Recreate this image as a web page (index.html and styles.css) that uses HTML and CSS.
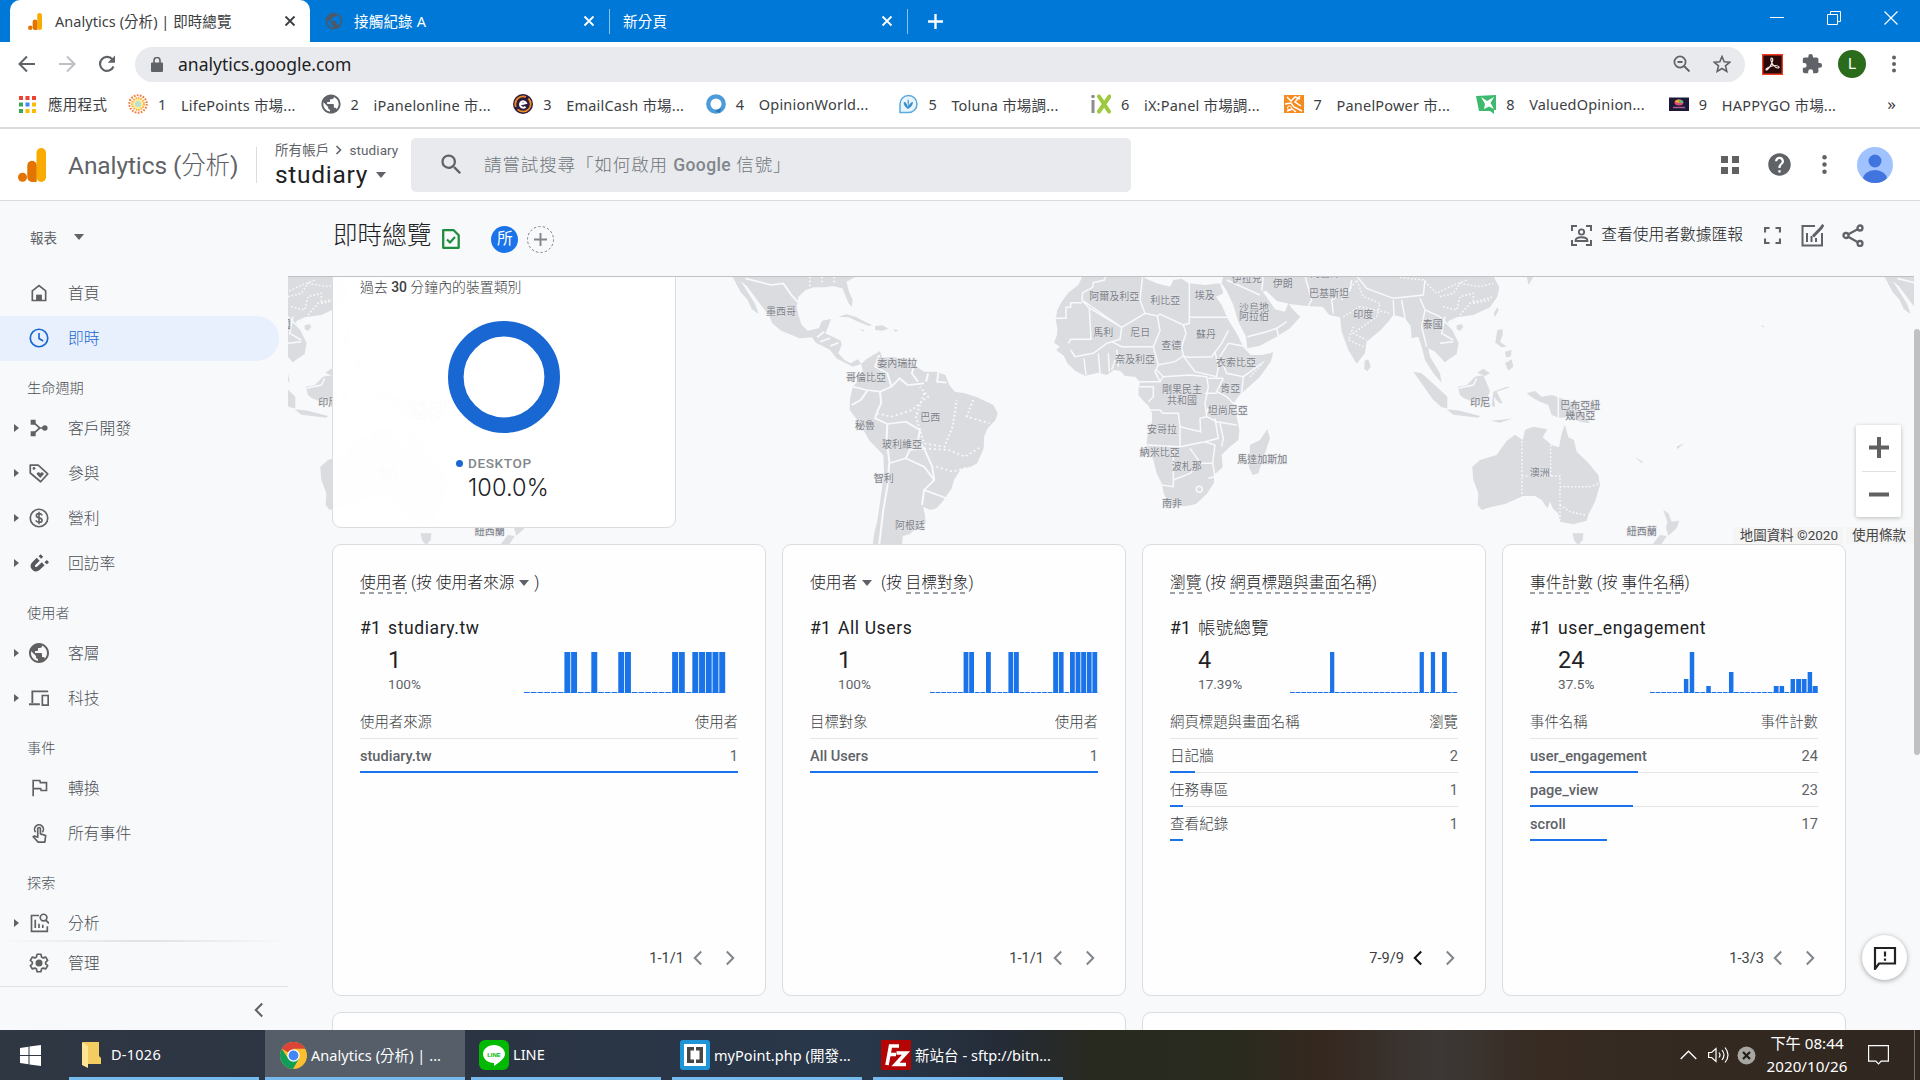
FILE: index.html
```html
<!DOCTYPE html>
<html lang="zh-Hant">
<head>
<meta charset="utf-8">
<title>Analytics (分析) | 即時總覽</title>
<link rel="stylesheet" href="styles.css">
</head>
<body>
<svg class="defs" width="0" height="0">
  <symbol id="ga" viewBox="0 0 28 34"><rect x="18.5" y="0" width="9.5" height="34" rx="4.7" fill="#f9ab00"/><path d="M9.3 17.5a4.7 4.7 0 0 1 9.4 0V34H14a4.7 4.7 0 0 1-4.700-4.700z" fill="#e37400"/><circle cx="4.500" cy="29.300" r="4.500" fill="#e37400"/></symbol>
  <symbol id="x" viewBox="0 0 12 12"><path d="M1.500 1.500l9 9m0-9l-9 9" stroke="currentColor" stroke-width="1.800" fill="none"/></symbol>
  <symbol id="globe" viewBox="0 0 24 24"><path fill="currentColor" d="M12 2C6.480 2 2 6.480 2 12s4.480 10 10 10 10-4.480 10-10S17.520 2 12 2zm-1 17.930c-3.950-.49-7-3.850-7-7.930 0-.62.080-1.210.210-1.790L9 15v1c0 1.100.9 2 2 2v1.930zm6.900-2.540c-.26-.81-1-1.390-1.900-1.390h-1v-3c0-.55-.45-1-1-1H8v-2h2c.55 0 1-.45 1-1V7h2c1.100 0 2-.9 2-2v-.41c2.930 1.190 5 4.060 5 7.410 0 2.080-.8 3.970-2.100 5.390z"/></symbol>
  <symbol id="dots" viewBox="0 0 24 24"><g fill="currentColor"><circle cx="12" cy="5.500" r="2"/><circle cx="12" cy="12" r="2"/><circle cx="12" cy="18.500" r="2"/></g></symbol>
  <symbol id="left" viewBox="0 0 24 24"><path d="M15.500 5l-7 7 7 7" fill="none" stroke="currentColor" stroke-width="2.200"/></symbol>
  <symbol id="right" viewBox="0 0 24 24"><path d="M8.500 5l7 7-7 7" fill="none" stroke="currentColor" stroke-width="2.200"/></symbol>
  <symbol id="search" viewBox="0 0 24 24"><path fill="currentColor" d="M15.500 14h-.79l-.28-.27A6.470 6.470 0 0 0 16 9.500 6.500 6.500 0 1 0 9.500 16c1.610 0 3.090-.59 4.230-1.570l.27.280v.79l5 4.990L20.490 19zM9.500 14a4.500 4.500 0 1 1 0-9 4.500 4.500 0 0 1 0 9z"/></symbol>
</svg>

<div class="tabs">
  <div class="tab active"><svg class="fav"><use href="#ga"/></svg><span>Analytics (分析) | 即時總覽</span><svg class="close"><use href="#x"/></svg></div>
  <div class="tab two"><svg class="fav globe"><use href="#globe"/></svg><span>接觸紀錄 A</span><svg class="close"><use href="#x"/></svg></div>
  <div class="tab three"><span>新分頁</span><svg class="close"><use href="#x"/></svg></div>
  <svg class="newtab" viewBox="0 0 14 14"><path d="M7 0v14M0 7h14" stroke="#fff" stroke-width="2.200"/></svg>
  <div class="winbtns">
    <svg viewBox="0 0 14 14"><path d="M0 6.500h14" stroke="#fff"/></svg>
    <svg viewBox="0 0 14 14"><path d="M.5 3.500h10v10H.5zM3.500 3.500v-3h10v10h-3" fill="none" stroke="#fff"/></svg>
    <svg viewBox="0 0 14 14"><path d="M.5.500l13 13m0-13l-13 13" stroke="#fff" stroke-width="1.200"/></svg>
  </div>
</div>

<div class="toolbar">
  <svg class="nav" viewBox="0 0 18 18"><path d="M17 9H2M9 1.500L1.500 9 9 16.500" fill="none" stroke="#5f6368" stroke-width="2"/></svg>
  <svg class="nav" viewBox="0 0 18 18"><path d="M1 9h15M9 1.500L16.500 9 9 16.500" fill="none" stroke="#bdc1c6" stroke-width="2"/></svg>
  <svg class="nav" viewBox="0 0 18 18"><path d="M15.500 11.500A7 7 0 1 1 14.500 4.500" fill="none" stroke="#5f6368" stroke-width="2.100"/><path d="M17 .5v7.300H9.700z" fill="#5f6368"/></svg>
  <div class="omnibox">
    <svg class="lock" viewBox="0 0 12 15"><path d="M1 5.500h10a1 1 0 0 1 1 1V14a1 1 0 0 1-1 1H1a1 1 0 0 1-1-1V6.500a1 1 0 0 1 1-1z" fill="#5f6368"/><path d="M3 6V3.500a3 3 0 0 1 6 0V6" fill="none" stroke="#5f6368" stroke-width="1.600"/></svg>
    <span class="url">analytics.google.com</span>
    <svg class="oi" viewBox="0 0 18 18"><circle cx="7" cy="7" r="5.600" fill="none" stroke="#5f6368" stroke-width="1.700"/><path d="M11 11l5.500 5.500M4.500 7h5" stroke="#5f6368" stroke-width="1.800"/></svg>
    <svg class="oi" viewBox="0 0 18 18"><path d="M9 1.500l2.200 5.200 5.600.5-4.300 3.700 1.300 5.500L9 13.500l-4.800 2.900 1.300-5.500L1.200 7.200l5.600-.5z" fill="none" stroke="#5f6368" stroke-width="1.600"/></svg>
  </div>
  <div class="exts">
    <svg width="21" height="21" viewBox="0 0 21 21"><path d="M.7.700h19.600v19.600H.7z" fill="#2a0a08" stroke="#f0391f" stroke-width="1.400"/><path d="M9.500 4c2.500 0 .8 5-1.500 8.500-1.500 2.500-4 4.500-4 3s6-4 9.500-4 4.500 2.500 2.500 2.500C13.500 14 9.500 10 9 6.500 8.800 5 9 4 9.500 4z" fill="none" stroke="#f4e4e2" stroke-width="1.200"/></svg>
    <svg width="22" height="22" viewBox="0 0 24 24"><path fill="#5f6368" d="M20.500 11H19V7c0-1.100-.9-2-2-2h-4V3.500a2.500 2.500 0 0 0-5 0V5H4c-1.100 0-1.990.9-1.990 2v3.800H3.500a2.700 2.700 0 0 1 0 5.400H2V20c0 1.100.9 2 2 2h3.800v-1.500a2.700 2.700 0 0 1 5.400 0V22H17c1.100 0 2-.9 2-2v-4h1.500a2.500 2.500 0 0 0 0-5z"/></svg>
    <span class="me">L</span>
    <svg width="20" height="24" viewBox="2 0 20 24" color="#5f6368"><use href="#dots" width="24" height="24"/></svg>
  </div>
</div>

<div class="bookmarks">
  <div class="apps"><svg width="17" height="17" viewBox="0 0 17 17"><path d="M0 0h4v4H0zM6.500 0h4v4h-4zM13 0h4v4h-4z" fill="#ea4335"/><path d="M0 6.500h4v4H0z" fill="#34a853"/><path d="M6.500 6.500h4v4h-4z" fill="#4285f4"/><path d="M13 6.500h4v4h-4zM6.500 13h4v4h-4zM13 13h4v4h-4z" fill="#fbbc04"/><path d="M0 13h4v4H0z" fill="#34a853"/></svg><span>應用程式</span></div>
  <div class="bm"><svg viewBox="0 0 20 20"><circle cx="10" cy="10" r="8.700" fill="none" stroke="#f0793c" stroke-width="2" stroke-dasharray="1.700 1.340"/><circle cx="10" cy="10" r="6" fill="#ffe9a0" stroke="#fbb040" stroke-width="2" stroke-dasharray="1.500 1"/><circle cx="10" cy="10" r="3" fill="#b4e3d2"/></svg><i>1</i><span>LifePoints 市場...</span></div>
  <div class="bm"><svg color="#5f6368"><use href="#globe" x="-1.500" y="-1.500" width="23" height="23"/></svg><i>2</i><span>iPanelonline 市...</span></div>
  <div class="bm"><svg viewBox="0 0 20 20"><circle cx="10" cy="10" r="10" fill="#2d1b3d"/><circle cx="10" cy="10" r="7.700" fill="none" stroke="#f08a24" stroke-width="1.800" stroke-dasharray="18 3"/><path d="M7 10.500l6-1.500a3.200 3.200 0 1 0-.5 3.800" fill="none" stroke="#fff" stroke-width="2"/></svg><i>3</i><span>EmailCash 市場...</span></div>
  <div class="bm"><svg viewBox="0 0 20 20"><circle cx="10" cy="10" r="7.700" fill="#fff" stroke="#4b9cd8" stroke-width="4.300"/><path d="M9 17l6-3-1 5z" fill="#2d78b8"/></svg><i>4</i><span>OpinionWorld...</span></div>
  <div class="bm"><svg viewBox="0 0 20 20"><path d="M2 18.500V10a8.500 8.500 0 1 1 8.500 8.500z" fill="#e8f5fc" stroke="#5aa9da" stroke-width="1.500"/><path d="M10 15c-3-2-5-5-4-7 2 0 3 2 4 5 0-4-1-6 0-8 1.500 2 1 5 0 8 1-3 3-5 5-5 0 3-2 5-5 7z" fill="#3b8fc9"/></svg><i>5</i><span>Toluna 市場調...</span></div>
  <div class="bm"><svg viewBox="0 0 20 20"><path d="M2 6v13" stroke="#8a8d91" stroke-width="3"/><circle cx="2" cy="2.500" r="1.800" fill="#8a8d91"/><path d="M8 2.500l10 15M18.500 2.500L8 17.500" stroke="#9bcb3c" stroke-width="4" stroke-linecap="round"/></svg><i>6</i><span>iX:Panel 市場調...</span></div>
  <div class="bm"><svg viewBox="0 0 20 20"><path d="M0 1h20v18H0z" fill="#f58a1f"/><path d="M3 3l4 4 4-4 5 2M16 2l-5 6 6 4M1 10l6-1 3 4 8 4M3 17l5-2 4 3" fill="none" stroke="#fff" stroke-width="1.500"/><circle cx="5.500" cy="14" r="2" fill="none" stroke="#fff"/></svg><i>7</i><span>PanelPower 市...</span></div>
  <div class="bm"><svg viewBox="0 0 20 20"><path d="M0 2l20-1v15h-2v4l-4-3H3z" fill="#3dba6d"/><path d="M5 3l6 4 7-4-3.500 6 3.500 6-5-2.500-5 2.500 1-5z" fill="#fff"/></svg><i>8</i><span>ValuedOpinion...</span></div>
  <div class="bm"><svg viewBox="0 0 20 20"><path d="M0 3.500h20v13.500H0z" fill="#1e1838"/><ellipse cx="10" cy="8.500" rx="4.500" ry="3" fill="#e2487c"/><path d="M6 8a4 2.500 0 0 1 4-2.500V9z" fill="#f5a623"/><path d="M10 9V5.500A4 3 0 0 1 14 9z" fill="#5bb974"/><path d="M4 13.500h12" stroke="#b05d8a" stroke-width="1.500"/></svg><i>9</i><span>HAPPYGO 市場...</span></div>
  <span class="more">»</span>
</div>

<header class="gahead">
  <svg class="galogo"><use href="#ga"/></svg>
  <span class="brand">Analytics (<em>分析</em>)</span>
  <div class="acct">
    <div class="crumb"><span>所有帳戶</span><svg width="8" height="10" viewBox="0 0 8 10"><path d="M1.500 1l4 4-4 4" fill="none" stroke="#5f6368" stroke-width="1.600"/></svg><span>studiary</span></div>
    <div class="prop">studiary<i class="caret"></i></div>
  </div>
  <div class="gsearch"><svg class="gs"><use href="#search"/></svg><span>請嘗試搜尋「如何啟用 <b>Google</b> 信號」</span></div>
  <div class="hicons">
    <svg width="18" height="18" viewBox="0 0 18 18"><path d="M0 0h7v7H0zM11 0h7v7h-7zM0 11h7v7H0zM11 11h7v7h-7z" fill="#616161"/></svg>
    <svg class="help" width="27" height="27" viewBox="0 0 24 24"><path fill="#5f6368" d="M12 2C6.480 2 2 6.480 2 12s4.480 10 10 10 10-4.480 10-10S17.520 2 12 2zm1 17h-2v-2h2v2zm2.070-7.750l-.9.920C13.450 12.900 13 13.500 13 15h-2v-.5c0-1.100.45-2.100 1.170-2.830l1.240-1.260c.37-.36.590-.86.590-1.410 0-1.100-.9-2-2-2s-2 .9-2 2H8c0-2.210 1.790-4 4-4s4 1.790 4 4c0 .88-.36 1.680-.93 2.250z"/></svg>
    <svg width="27" height="27" viewBox="0 0 24 24" color="#5f6368"><use href="#dots" width="24" height="24"/></svg>
    <svg width="36" height="36" viewBox="0 0 36 36"><clipPath id="av"><circle cx="18" cy="18" r="18"/></clipPath><g clip-path="url(#av)"><path d="M0 0h36v36H0z" fill="#a0c3ff"/><circle cx="18" cy="14" r="6.500" fill="#4274e0"/><ellipse cx="18" cy="32" rx="12" ry="9" fill="#4274e0"/></g></svg>
  </div>
</header>

<div class="main">
  <nav class="side">
    <div class="rep">報表<i class="caret"></i></div>
    <div class="items">
      <div class="it"><svg viewBox="0 0 24 24"><path d="M4 21V9.500L12 3l8 6.500V21z" fill="none" stroke="#616161" stroke-width="2"/><path d="M8.500 21v-7h7v7z" fill="#616161"/></svg>首頁</div>
      <div class="it on"><svg viewBox="0 0 24 24"><circle cx="12" cy="12" r="10.500" fill="none" stroke="#1967d2" stroke-width="2"/><path d="M12 6v6.500l5 3" fill="none" stroke="#1967d2" stroke-width="2"/></svg>即時</div>
      <div class="sec">生命週期</div>
      <div class="it ex"><svg viewBox="0 0 24 24"><path d="M2 2h6v6H2zM2 16h6v6H2z" fill="#616161"/><circle cx="19" cy="12" r="3.300" fill="#616161"/><path d="M5 5l8 7-8 7M13 12h6" fill="none" stroke="#616161" stroke-width="2"/></svg>客戶開發</div>
      <div class="it ex"><svg viewBox="0 0 24 24"><path d="M1.500 2.500h9.500l11.500 10.500-8.500 9.500L1.500 12z" fill="none" stroke="#616161" stroke-width="2" stroke-linejoin="round"/><circle cx="6" cy="6.500" r="1.700" fill="#616161"/><path d="M13.500 18l-4-4.200c-1-2.500 2.500-3.800 4-1.500 1.500-2.300 5-1 4 1.500z" fill="#616161"/></svg>參與</div>
      <div class="it ex"><svg viewBox="0 0 24 24"><circle cx="12" cy="12" r="10.500" fill="none" stroke="#616161" stroke-width="2"/><path d="M15.500 9c-.3-3-6.700-3-6.700.2 0 3.500 6.900 1.800 6.900 5.500 0 3.300-6.900 3.300-7.200 0M12 4.500v15" fill="none" stroke="#616161" stroke-width="1.900"/></svg>營利</div>
      <div class="it ex"><svg viewBox="0 0 24 24"><path d="M11 7.500l-5.500 5.500c-3 3.500 2 8.500 5.500 5.500l6-5.500" fill="none" stroke="#55585c" stroke-width="5"/><path d="M14 1.500l3 3-2.500 2.500-3-3zM21.500 8.500l2.500 2.500-2.500 2.500-3-2.500z" fill="#55585c"/></svg>回訪率</div>
      <div class="sec">使用者</div>
      <div class="it ex"><svg class="gl" color="#616161"><use href="#globe"/></svg>客層</div>
      <div class="it ex"><svg viewBox="0 0 24 24"><path d="M23 4H4v14M0 19.500h13" fill="none" stroke="#616161" stroke-width="2.200"/><path d="M16 9h7v11.500h-7z" fill="none" stroke="#616161" stroke-width="2"/></svg>科技</div>
      <div class="sec">事件</div>
      <div class="it"><svg viewBox="0 0 24 24"><path d="M5 22V3h8l.6 2.500H21V15h-6.500L14 12.800H5" fill="none" stroke="#616161" stroke-width="2"/></svg>轉換</div>
      <div class="it"><svg viewBox="0 0 24 24"><path d="M8 11a5.300 5.300 0 1 1 8 0" fill="none" stroke="#616161" stroke-width="2"/><path d="M10.500 17V7a1.500 1.500 0 0 1 3.200 0v6l6.300 2-1 8h-8l-6-6.500 1.500-1z" fill="none" stroke="#616161" stroke-width="2" stroke-linejoin="round"/></svg>所有事件</div>
      <div class="sec">探索</div>
      <div class="it ex"><svg viewBox="0 0 24 24"><path d="M12 3H3v19h19v-6M7.500 8v10M12 13v5M16.500 14v4" fill="none" stroke="#616161" stroke-width="2"/><circle cx="17.500" cy="5.500" r="4" fill="none" stroke="#616161" stroke-width="2"/><path d="M20 8.500l4 4" stroke="#616161" stroke-width="2.200"/></svg>分析</div>
    </div>
    <div class="admin"><svg viewBox="0 0 24 24"><path d="M9.700 1.500h4.600l.7 3.200 2 1.200 3.100-1 2.300 4-2.400 2.100v2l2.400 2.100-2.300 4-3.100-1-2 1.200-.7 3.200H9.700L9 19.300l-2-1.200-3.100 1-2.300-4L4 13v-2L1.600 8.900l2.300-4 3.100 1 2-1.200z" fill="none" stroke="#616161" stroke-width="2" stroke-linejoin="round"/><circle cx="12" cy="12" r="4.200" fill="#616161"/></svg>管理</div>
    <div class="fold"><svg width="22" height="22"><use href="#left"/></svg></div>
  </nav>

  <section class="content">
    <div class="titlebar">
      <h1>即時總覽</h1>
      <svg class="ok" viewBox="0 0 18 20"><path d="M1.200 1.200h10.500l5 5v12.600H1.200z" fill="none" stroke="#1e8e3e" stroke-width="2.300" stroke-linejoin="round"/><path d="M5 10.500l3 3 5-5.500" fill="none" stroke="#1e8e3e" stroke-width="2.200"/></svg>
      <span class="seg">所</span>
      <svg class="addseg" viewBox="0 0 27 27"><circle cx="13.500" cy="13.500" r="13" fill="none" stroke="#80868b" stroke-dasharray="2.500 2"/><path d="M13.500 7v13M7 13.500h13" stroke="#80868b" stroke-width="1.900"/></svg>
      <div class="tools">
        <svg width="21" height="21" viewBox="0 0 21 21"><path d="M1 6V1h5M15 1h5v5M20 15v5h-5M6 20H1v-5" fill="none" stroke="#5f6368" stroke-width="2"/><circle cx="10.500" cy="7" r="2.700" fill="none" stroke="#5f6368" stroke-width="1.800"/><path d="M4.500 16c0-5 12-5 12 0z" fill="none" stroke="#5f6368" stroke-width="1.800"/></svg>
        <span>查看使用者數據匯報</span>
        <svg class="t2" width="17" height="17" viewBox="0 0 17 17"><path d="M1 5.500V1h4.500M11.500 1H16v4.500M16 11.500V16h-4.500M5.500 16H1v-4.500" fill="none" stroke="#5f6368" stroke-width="2.200"/></svg>
        <svg class="t3" width="23" height="23" viewBox="0 0 23 23"><path d="M14 2H1.500v19.500H21V9M6 9v9M10.500 12v6M15 14v4" fill="none" stroke="#5f6368" stroke-width="2"/><path d="M12 12.500L21 3M20.500 1l2 2" stroke="#5f6368" stroke-width="3"/></svg>
        <svg class="t4" width="23" height="23" viewBox="0 0 23 23"><path d="M4 11.500l14-7.500M4 11.500l14 8" stroke="#5f6368" stroke-width="2.200"/><g fill="#f8f9fb" stroke="#5f6368" stroke-width="2.300"><circle cx="4" cy="11.500" r="2.500"/><circle cx="18" cy="4" r="2.500"/><circle cx="18" cy="19.500" r="2.500"/></g></svg>
      </div>
    </div>

    <div class="mapbox">
      <svg class="map" viewBox="288 276 1626 268">
        <defs>
          <g id="world">
            <g transform="translate(320 200) scale(.40816 .33333)">
              <g fill="#dadce0">
                <path d="M1010 228H1315L1290 245 1296 275 1305 300 1303 320 1295 310 1280 265 1255 258 1240 262 1210 262 1190 270 1172 290 1168 320 1172 345 1180 375 1195 392 1222 385 1230 362 1252 357 1245 380 1238 400 1252 408 1276 422 1278 435 1270 460 1285 480 1300 490 1318 478 1326 492 1305 500 1265 475 1250 450 1215 428 1205 412 1175 415 1130 392 1108 370 1100 345 1080 315 1062 285 1045 258 1030 242 1050 280 1066 312 1075 342 1058 328 1048 300 1030 275Z"/>
                <path d="M1270 350L1290 343 1312 350 1335 365 1352 375 1345 378 1320 366 1295 352ZM1360 378L1378 376 1392 386 1378 392 1360 390ZM1405 388L1417 390 1410 396ZM1322 388L1335 390 1330 394Z"/>
                <path d="M1326 492L1338 478 1372 453 1378 475 1400 470 1445 480 1455 495 1480 515 1510 515 1532 525 1542 555 1555 575 1580 580 1610 592 1650 615 1660 640 1655 660 1636 685 1627 710 1626 745 1610 790 1595 800 1570 808 1553 840 1548 865 1525 905 1510 925 1495 930 1478 920 1482 945 1484 965 1478 980 1455 990 1445 1003 1428 1008 1426 1035H1354L1358 1000 1366 960 1374 890 1382 820 1380 765 1345 720 1325 675 1298 630 1298 600 1305 560 1325 535 1330 515Z"/>
              </g>
              <g fill="none" stroke="#f8f9fb" stroke-width="5">
                <path d="M1042 235L1105 255 1135 250 1155 285 1170 305M1218 412L1235 395M1225 425L1250 415M1250 438L1270 428M1370 465L1360 500 1390 520 1400 560 1372 575 1375 610 1365 635 1360 655 1390 672 1435 665 1470 690 1465 720 1480 745M1305 560L1340 570 1372 575M1303 615L1325 600 1342 570M1400 560L1420 535 1440 555 1480 550M1455 500L1450 520 1465 545M1490 520L1485 545M1515 518L1512 545 1535 548M1390 672L1388 720 1395 785 1390 860 1380 930 1370 1035M1395 790L1435 775 1480 800 1505 840 1480 870 1475 915M1435 775L1445 750 1480 745 1500 800 1505 840M1480 870L1535 895"/>
                <path stroke-dasharray="5 7" d="M1365 640L1400 650 1450 630 1490 590 1470 560M1480 580L1460 650 1480 730 1530 740 1550 680 1560 600M1480 745L1540 750 1580 770 1620 740M1510 800L1550 815 1590 800M1600 600L1585 650 1640 670M1200 230V260M1230 230V255M1260 230V250"/>
              </g>
            </g>
            <g transform="translate(960 200) scale(.33333)">
              <g fill="#dadce0">
                <path d="M368 228L355 255 325 278 305 305 292 330 287 358 292 385 291 405 282 428 300 440 288 450 312 468 322 490 345 512 375 527 415 518 440 525 462 510 480 512 495 528 525 530 540 545 536 565 535 585 550 602 566 618 576 640 576 670 562 710 560 735 580 780 590 820 605 850 612 882 625 905 640 920 680 918 708 912 740 882 762 848 762 825 788 802 785 765 808 742 835 720 838 690 830 650 822 612 850 575 900 530 932 485 940 457 905 465 875 465 850 440 830 400 805 360 785 315 768 290 790 280 780 250 735 255 685 250 665 236 640 240 630 260 590 250 555 235 550 228Z"/>
                <path d="M790 228L785 250 800 272 820 315 835 365 858 410 862 445 900 437 950 410 990 385 1021 350 995 325 985 310 975 335 945 328 930 305 908 275 918 272 935 288 950 303 990 312 1040 318 1088 320 1108 345 1140 352 1145 395 1165 450 1190 491 1215 460 1220 425 1262 390 1285 365 1300 345 1322 350 1335 355 1352 378 1355 415 1375 410 1385 440 1395 480 1420 520 1445 548 1440 520 1410 470 1405 445 1425 455 1440 470 1454 487 1490 462 1496 430 1478 392 1462 365 1490 352 1540 345 1590 322 1612 290 1618 262 1600 228Z"/>
                <path d="M1490 376L1505 372 1510 382 1500 392 1490 388ZM1612 322L1616 330 1606 350 1601 340ZM1612 390L1628 388 1628 405 1620 425 1640 440 1625 442 1606 428ZM1635 455L1655 450 1652 470 1638 472ZM1635 490L1655 478 1660 500 1645 512ZM1493 560L1520 556 1545 530 1570 526 1585 560 1590 575 1578 600 1540 605 1512 595 1500 585ZM1552 518L1570 506 1590 520 1575 528ZM1360 515L1385 520 1430 560 1462 590 1462 625 1445 622 1420 600 1395 565ZM1460 628L1500 632 1560 648 1555 653 1480 644ZM1592 662L1640 658 1660 655 1620 668ZM1600 575L1640 560 1650 562 1610 575 1628 610 1618 610 1602 590 1605 620 1595 618ZM1700 580L1725 573 1745 590 1775 585 1810 597 1850 620 1875 650 1890 670 1860 665 1830 650 1798 654 1775 645 1765 615 1740 605 1720 595ZM1700 230H1720L1706 255ZM1214 482L1225 478 1232 500 1222 513 1213 508ZM922 688L930 715 915 760 895 820 878 825 867 802 870 735 900 720ZM2405 375L2414 380 2406 382ZM2025 770L2048 785 2045 790ZM2150 740L2172 730 2152 748Z"/>
                <path d="M1537 800L1560 780 1610 765 1640 722 1665 704 1688 720 1695 690 1720 680 1762 688 1748 712 1775 735 1797 742 1805 700 1815 674 1825 712 1842 720 1850 755 1882 785 1915 825 1920 855 1905 905 1885 945 1880 962 1840 973 1800 965 1795 940 1780 928 1770 905 1762 925 1745 900 1725 888 1690 888 1635 912 1590 922 1565 930 1553 915 1555 880 1540 840ZM1837 1000H1870L1868 1020 1855 1035 1843 1022ZM2110 930L2125 940 2135 965 2158 962 2150 985 2125 1007 2118 985 2122 965ZM2100 1005L2120 1008 2100 1040H2072Z"/>
              </g>
              <g fill="none" stroke="#f8f9fb" stroke-width="4.500">
                <path d="M437 228L433 240 400 248 398 262 368 278 366 300 485 382 555 340 540 300 548 228M366 308H332V322H318V355H287M366 300L388 325 393 418H332M390 325L485 382 480 418 440 430 400 460M555 340L592 348 600 342 670 375 688 370V250M688 352H805M592 348L600 392 580 440 485 440 455 425M670 375L678 400 665 440 670 468 685 472 755 470 785 430 805 392M580 440L595 495 645 485 670 468 705 515 770 530 775 500 765 455M465 480L455 510M415 460L420 520M445 460L448 515M400 460L345 470 332 450M372 475L378 525M332 418L325 430M470 448L475 500M595 495L585 515 600 545H540M600 545L610 530 690 525 740 530 745 560 735 610 740 650 720 655 722 695 660 680 655 640H608L600 630H565M590 510L610 530M538 560H580V590L565 605M805 430L850 438 875 465M805 430L780 470 800 520 850 530 905 490M850 530L845 580 822 612M745 535L790 535M790 535L770 575 800 590 822 612M735 580H770M745 620L740 640M740 650L770 665 830 675M660 680V740L560 735M660 740L735 725 775 715 765 655M690 745L722 790 758 790 765 735 735 725M720 790L690 820 640 840 640 860 605 855M640 840V745M758 790L765 830 745 835M780 670L790 715 785 740"/>
                <path d="M800 240L900 285M910 228L905 272M862 410L920 395 950 385 955 408M950 385L980 365M1035 228L1055 300 1045 318M1120 340L1115 300 1170 270 1175 240M1190 228L1220 265 1300 295 1390 285 1395 240M1300 300L1302 350M1325 300L1335 355M1380 295L1395 330 1440 350M1395 330L1385 380 1400 440M1440 350L1480 390M1455 350L1445 400 1480 420M1440 430L1480 425M1495 565L1540 555 1550 535M1795 590V654"/>
                <circle cx="718" cy="868" r="9"/>
                <path stroke-dasharray="5 6" d="M1145 300L1190 240 1210 290 1260 310 1250 350 1180 400 1220 420M1150 350L1200 320 1290 340M1180 380L1165 420 1210 440M1320 232L1390 240 1430 280 1470 260 1520 240M1440 290L1480 280 1500 250 1560 260 1600 250M1450 320L1490 330 1500 290 1540 280 1540 310 1590 300M1500 345L1530 310 1600 290M1686 712V890M1772 735V828M1686 828H1800V965M1800 860H1890L1920 850M1800 915L1830 935 1875 945M870 530L890 510 915 480"/>
              </g>
              <g class="lbl">
                <text x="463" y="299">阿爾及利亞</text><text x="616" y="311">利比亞</text><text x="734" y="297">埃及</text><text x="860" y="246">伊拉克</text><text x="968" y="261">伊朗</text><text x="1096" y="232">阿富汗</text><text x="1107" y="291">巴基斯坦</text><text x="882" y="332">沙烏地</text><text x="882" y="361">阿拉伯</text><text x="1210" y="354">印度</text><text x="1418" y="384">泰國</text><text x="430" y="407">馬利</text><text x="541" y="408">尼日</text><text x="738" y="415">蘇丹</text><text x="634" y="446">查德</text><text x="525" y="489">奈及利亞</text><text x="828" y="498">衣索比亞</text><text x="811" y="575">肯亞</text><text x="666" y="580">剛果民主</text><text x="666" y="611">共和國</text><text x="803" y="641">坦尚尼亞</text><text x="606" y="700">安哥拉</text><text x="599" y="769">納米比亞</text><text x="680" y="811">波札那</text><text x="907" y="790">馬達加斯加</text><text x="636" y="921">南非</text><text x="1561" y="618">印尼</text><text x="1861" y="626">巴布亞紐</text><text x="1861" y="657">幾內亞</text><text x="1739" y="828">澳洲</text><text x="2045" y="1005">紐西蘭</text>
                <text x="-537" y="345">墨西哥</text><text x="-188" y="501">委內瑞拉</text><text x="-282" y="543">哥倫比亞</text><text x="-89" y="663">巴西</text><text x="-285" y="687">秘魯</text><text x="-174" y="744">玻利維亞</text><text x="-229" y="847">智利</text><text x="-150" y="987">阿根廷</text>
              </g>
            </g>
          </g>
        </defs>
        <use href="#world"/><use href="#world" x="-1152"/><use href="#world" x="1152"/>
      </svg>
      <div class="device">
        <div class="dt">過去 <b>30</b> 分鐘內的裝置類別</div>
        <svg width="112" height="112" viewBox="0 0 112 112"><circle cx="56" cy="56" r="48.200" fill="none" stroke="#1967d2" stroke-width="15.600"/></svg>
        <div class="dleg"><i></i>DESKTOP</div>
        <div class="dval">100.0%</div>
      </div>
      <div class="zoomctl"><svg viewBox="0 0 20 21"><path d="M10 0v21M0 10.500h20" stroke="#616161" stroke-width="4"/></svg><hr><svg viewBox="0 0 20 21"><path d="M0 10.500h20" stroke="#616161" stroke-width="4"/></svg></div>
      <div class="attr"><span>地圖資料 ©2020</span><span>使用條款</span></div>
    </div>

    <div class="grid">
      <article class="card">
        <h2><u>使用者</u> (按 使用者來源<i class="caret"></i> )</h2>
        <h3><span>#1</span>studiary.tw</h3>
        <div class="stat"><div><p>1</p><small>100%</small></div>
          <svg class="spark first" viewBox="0 0 30 41" preserveAspectRatio="none"><path class="base" d="M0 40.500H30"/><path d="M6 0h.88v41H6zM7 0h.88v41H7zM10 0h.88v41H10zM14 0h.88v41H14zM15 0h.88v41H15zM22 0h.88v41H22zM23 0h.88v41H23zM25 0h.88v41H25zM26 0h.88v41H26zM27 0h.88v41H27zM28 0h.88v41H28zM29 0h.88v41H29z"/></svg></div>
        <div class="th"><span>使用者來源</span><span>使用者</span></div>
        <div class="tr"><b>studiary.tw</b><span>1</span><i style="width:100%"></i></div>
        <div class="pg">1-1/1<svg><use href="#left"/></svg><svg><use href="#right"/></svg></div>
      </article>
      <article class="card">
        <h2>使用者<i class="caret"></i> &nbsp;(按 <u>目標對象</u>)</h2>
        <h3><span>#1</span>All Users</h3>
        <div class="stat"><div><p>1</p><small>100%</small></div>
          <svg class="spark" viewBox="0 0 30 41" preserveAspectRatio="none"><path class="base" d="M0 40.500H30"/><path d="M6 0h.86v41H6zM7 0h.86v41H7zM10 0h.86v41H10zM14 0h.86v41H14zM15 0h.86v41H15zM22 0h.86v41H22zM23 0h.86v41H23zM25 0h.86v41H25zM26 0h.86v41H26zM27 0h.86v41H27zM28 0h.86v41H28zM29 0h.86v41H29z"/></svg></div>
        <div class="th"><span>目標對象</span><span>使用者</span></div>
        <div class="tr"><b>All Users</b><span>1</span><i style="width:100%"></i></div>
        <div class="pg">1-1/1<svg><use href="#left"/></svg><svg><use href="#right"/></svg></div>
      </article>
      <article class="card">
        <h2><u>瀏覽</u> (按 <u>網頁標題與畫面名稱</u>)</h2>
        <h3><span>#1</span><em>帳號總覽</em></h3>
        <div class="stat"><div><p>4</p><small>17.39%</small></div>
          <svg class="spark" viewBox="0 0 30 41" preserveAspectRatio="none"><path class="base" d="M0 40.500H30"/><path d="M7.150 0h.76v41h-.76zM23.150 0h.76v41h-.76zM25.150 0h.76v41h-.76zM27.150 0h.86v41h-.86z"/></svg></div>
        <div class="th"><span>網頁標題與畫面名稱</span><span>瀏覽</span></div>
        <div class="tr"><em>日記牆</em><span>2</span><i style="width:8.7%"></i></div>
        <div class="tr"><em>任務專區</em><span>1</span><i style="width:4.35%"></i></div>
        <div class="tr"><em>查看紀錄</em><span>1</span><i style="width:4.35%"></i></div>
        <div class="pg">7-9/9<svg class="act"><use href="#left"/></svg><svg><use href="#right"/></svg></div>
      </article>
      <article class="card">
        <h2><u>事件計數</u> (按 <u>事件名稱</u>)</h2>
        <h3><span>#1</span>user_engagement</h3>
        <div class="stat"><div><p>24</p><small>37.5%</small></div>
          <svg class="spark" viewBox="0 0 30 41" preserveAspectRatio="none"><path class="base" d="M0 40.500H30"/><path d="M6.050 27h.8v14h-.8zM7.100 0h.8v41h-.8zM10.050 34h.8v7h-.8zM14.100 20h.8v21h-.8zM22.100 34h.86v7h-.86zM23.150 34h.8v7h-.8zM25.100 27h.8v14h-.8zM26.100 27h.86v14h-.86zM27.100 27h.86v14h-.86zM28.150 20h.8v21h-.8zM29.050 34h.9v7h-.9z"/></svg></div>
        <div class="th"><span>事件名稱</span><span>事件計數</span></div>
        <div class="tr"><b>user_engagement</b><span>24</span><i style="width:37.5%"></i></div>
        <div class="tr"><b>page_view</b><span>23</span><i style="width:35.9%"></i></div>
        <div class="tr"><b>scroll</b><span>17</span><i style="width:26.6%"></i></div>
        <div class="pg">1-3/3<svg><use href="#left"/></svg><svg><use href="#right"/></svg></div>
      </article>
      <article class="card wide"></article>
      <article class="card wide"></article>
    </div>
    <div class="fb"><svg width="24" height="24" viewBox="0 0 24 24"><path d="M2 23V2h20v15.500H6z" fill="none" stroke="#222" stroke-width="2.200"/><path d="M12 5.500v5M12 12.500v2.300" stroke="#222" stroke-width="2.200"/></svg></div>
    <div class="sbar"></div>
  </section>
</div>

<footer class="taskbar">
  <div class="start"><svg width="21" height="21" viewBox="0 0 21 21"><path d="M0 3l8.500-1.200V10H0zM9.500 1.600L21 0v10H9.500zM0 11h8.500v8.200L0 18zM9.500 11H21v10l-11.500-1.600z" fill="#fff"/></svg></div>
  <div class="task t-folder"><svg width="19" height="26" viewBox="0 0 19 26"><path d="M1 0h16v14l2 2v6H1z" fill="#f3cd5f"/><path d="M0 0l6 4v22l-6-3z" fill="#ffe695"/></svg><span>D-1026</span></div>
  <div class="task cur"><svg width="27" height="27" viewBox="0 0 27 27"><circle cx="13.500" cy="13.500" r="13.500" fill="#fbc02d"/><path d="M13.500 13.500L1.800 6.750A13.500 13.500 0 0 1 25.200 6.750H13.500z" fill="#db4437"/><path d="M1.800 6.750A13.500 13.500 0 0 0 13 27l6-10.500-5.500-3-6 2z" fill="#0f9d58"/><circle cx="13.500" cy="13.500" r="6.200" fill="#fff"/><circle cx="13.500" cy="13.500" r="4.900" fill="#4285f4"/></svg><span>Analytics (分析) | ...</span></div>
  <div class="task"><svg width="30" height="30" viewBox="0 0 30 30"><rect width="30" height="30" rx="6" fill="#00b900"/><path d="M15 5c6 0 11 4 11 9 0 4-5 8-11 12v-3C9 23 4 19 4 14s5-9 11-9z" fill="#fff"/><text x="15" y="17" text-anchor="middle" class="linetxt">LINE</text></svg><span>LINE</span></div>
  <div class="task"><svg width="30" height="30" viewBox="0 0 30 30"><rect width="30" height="30" rx="3" fill="#1f94d6"/><path d="M4 4h22v22H4z" fill="#fff"/><path d="M7 7h7v3.500h-3.500v9H14V23H7zM23 7h-7v3.500h3.500v9H16V23h7z" fill="#474747"/></svg><span>myPoint.php (開發...</span></div>
  <div class="task"><svg width="30" height="30" viewBox="0 0 30 30"><path d="M0 0h30v30H0z" fill="#b40404"/><path d="M6 25L9.500 6H18M8 14.500h7M15.500 13H25L14.500 24.500H25" fill="none" stroke="#fff" stroke-width="3.600"/></svg><span>新站台 - sftp://bitn...</span></div>
  <div class="tray">
    <svg class="up" width="17" height="10" viewBox="0 0 17 10"><path d="M.7 9l7.800-7.800L16.300 9" fill="none" stroke="#fff" stroke-width="1.300"/></svg>
    <svg class="snd" width="21" height="18" viewBox="0 0 21 18"><path d="M.6 6.500h3L8 2.500v13l-4.400-4H.6zM11 6.500q2 2.500 0 5M14 4q4 5 0 10M17 1.500q6 7.500 0 15" fill="none" stroke="#fff" stroke-width="1.200"/></svg>
    <svg class="xc" width="19" height="19" viewBox="0 0 19 19"><circle cx="9.500" cy="9.500" r="9" fill="#a8a6a2"/><path d="M6 6l7 7m0-7l-7 7" stroke="#241d18" stroke-width="2.200"/></svg>
    <div class="clock"><div>下午 08:44</div><div>2020/10/26</div></div>
    <svg class="note" width="21" height="20" viewBox="0 0 21 20"><path d="M.6.600h19.800v15.600h-7.200l-2.700 2.800-2.700-2.800H.6z" fill="none" stroke="#fff" stroke-width="1.200"/></svg>
  </div>
</footer>
</body>
</html>
```
FILE: styles.css
```css
* { box-sizing: border-box; }
body { margin: 0; width: 1920px; height: 1080px; overflow: hidden; display: flex; flex-direction: column; background: #fff; font-family: Roboto, "Noto Sans CJK TC", sans-serif; font-weight: 400; color: #5f6368; }
svg { flex: none; display: block; }
span, i, em { font-style: normal; white-space: nowrap; }
em { font-weight: 300; }
.defs { position: absolute; }
.caret { display: inline-block; border: 5.500px solid transparent; border-top: 6px solid #5f6368; border-bottom: 0; }

/* browser tabs */
.tabs { height: 42px; flex: none; background: #0078d7; display: flex; align-items: center; padding-left: 10px; font: 14.500px "Noto Sans", "Noto Sans CJK TC", sans-serif; color: #fff; }
.tab { display: flex; align-items: center; height: 42px; }
.tab span { flex: 1; padding-bottom: 2px; }
.active { width: 300px; background: #fff; color: #3c4043; border-radius: 10px 10px 0 0; padding: 0 14px 0 17px; }
.active span { letter-spacing: .05px; }
.fav { width: 16px; height: 17px; margin-right: 12px; }
.fav.globe { width: 20px; height: 20px; margin-right: 10px; color: #4a5a6c; }
.close { width: 12px; height: 12px; }
.two { width: 299px; padding: 0 14px; }
.two span { letter-spacing: .2px; }
.three { width: 299px; height: 25px; padding: 0 14px 0 13px; border: solid #8fc3ee; border-width: 0 1px; }
.three span { letter-spacing: .3px; }
.newtab { width: 15px; height: 15px; margin-left: 20px; }
.winbtns { margin-left: auto; margin-right: 22px; display: flex; gap: 43px; margin-top: -7px; }
.winbtns svg { width: 14px; height: 14px; }

.toolbar { height: 45px; flex: none; display: flex; align-items: center; padding-left: 18px; padding-bottom: 1px; }
.nav { width: 18px; height: 18px; margin-right: 22px; }
.nav + .nav + .nav { margin-right: 19px; }
.omnibox { width: 1610px; height: 35px; border-radius: 18px; background: #e9eaed; display: flex; align-items: center; padding: 0 14px 0 16px; }
.lock { width: 12px; height: 15px; }
.url { flex: 1; margin-left: 15px; font: 17.500px "Noto Sans", sans-serif; color: #202124; letter-spacing: 0; padding-bottom: 1px; }
.oi { width: 18px; height: 18px; margin-left: 22px; }
.exts { display: flex; align-items: center; margin-left: 17px; gap: 18px; }
.me { width: 28px; height: 28px; border-radius: 50%; background: #2a6b1c; color: #fff; font-size: 15px; line-height: 28px; text-align: center; margin: 0 0 0 -3px; }

.bookmarks { height: 42px; flex: none; display: flex; align-items: center; padding: 0 0 6px 19px; border-bottom: 2px solid #dadce0; font: 14.500px "Noto Sans", "Noto Sans CJK TC", sans-serif; color: #3c4043; }
.apps { width: 109px; display: flex; gap: 12px; }
.apps span { line-height: 17px; letter-spacing: .3px; }
.bm { width: 192.600px; display: flex; align-items: center; }
.bm svg { width: 20px; height: 20px; }
.bm i { width: 23px; margin-left: 10px; }
.bm span { letter-spacing: .2px; }
.more { margin-left: 26px; font-size: 17px; line-height: 20px; }

/* product header */
.gahead { height: 72px; flex: none; display: flex; align-items: center; border-bottom: 1px solid #dadce0; padding-left: 18px; }
.galogo { width: 28px; height: 34px; }
.brand { width: 188px; margin-left: 22px; font-size: 24.500px; letter-spacing: -.1px; padding-bottom: 2px; }
.acct { height: 36px; width: 155px; border-left: 1px solid #dadce0; padding-left: 18px; display: flex; flex-direction: column; justify-content: center; }
.crumb { font-size: 13.500px; display: flex; align-items: center; gap: 6px; line-height: 18px; letter-spacing: .1px; padding-top: 1px; }
.prop { font-size: 24.500px; line-height: 31px; color: #202124; display: flex; align-items: center; letter-spacing: .7px; }
.prop .caret { margin: 2px 0 0 8px; }
.gsearch { width: 720px; height: 54px; background: #e8eaed; border-radius: 5px; display: flex; align-items: center; font-size: 17.500px; font-weight: 300; color: #6f757a; }
.gs { width: 27px; height: 27px; margin: 0 19px 0 27px; color: #5f6368; }
.gsearch span { letter-spacing: .9px; padding-bottom: 2px; }
.gsearch b { font-weight: 500; letter-spacing: .4px; color: #80868b; }
.hicons { margin-left: auto; margin-right: 27px; display: flex; align-items: center; gap: 27px; }
.hicons .help { margin-right: -9px; }
.hicons svg:nth-child(3) { margin-right: -8px; }

.main { flex: 1; display: flex; min-height: 0; background: #f8f9fb; }
.side { width: 288px; display: flex; flex-direction: column; font-size: 15.800px; font-weight: 300; color: #4b4f54; }
.rep { height: 70px; padding: 2px 0 0 30px; display: flex; align-items: center; font-size: 13.500px; font-weight: 400; color: #5f6368; }
.rep .caret { margin-left: 17px; }
.items { height: 669px; overflow: hidden; }
.it, .admin { height: 45px; display: flex; align-items: center; padding: 0 0 2px 29px; }
.it svg, .admin svg { width: 20px; height: 20px; margin: 1px 19px 0 0; }
.it .gl { width: 24px; height: 24px; margin: 1px 17px 0 -2px; }
.on { width: 279px; background: #e8f0fe; border-radius: 0 23px 23px 0; color: #1967d2; }
.ex::before { content: ""; border: 4.500px solid transparent; border-left: 5px solid #616161; border-right: 0; margin: 0 10px 0 -15px; }
.sec { height: 45px; padding: 16px 0 0 27px; font-size: 14.200px; line-height: 22px; }
.admin { height: 47px; border-bottom: 1px solid #e0e2e5; background: linear-gradient(90deg, #f8f9fb, #dfe1e4 50%, #f8f9fb) 0 0 / 100% 2px no-repeat; }
.fold { flex: 1; padding: 12px 0 0 248px; color: #616161; }

.content { flex: 1; display: flex; flex-direction: column; position: relative; min-width: 0; }
.titlebar { height: 75px; flex: none; display: flex; align-items: center; padding: 0 55px 6px 45px; }
h1 { margin: 0; font-size: 24.600px; font-weight: 300; color: #202124; line-height: 34px; }
.ok { width: 18px; height: 20px; margin: 6px 0 0 11px; }
.seg { width: 27px; height: 27px; border-radius: 50%; background: #1a73e8; color: #fff; font-size: 15.700px; line-height: 25px; text-align: center; margin: 7px 9px 0 31px; }
.addseg { width: 27px; height: 27px; margin-top: 7px; }
.tools { margin-left: auto; display: flex; align-items: center; font-size: 15.750px; font-weight: 300; color: #202124; }
.tools span { margin: -4px 21px 0 9px; }
.t3 { margin: 0 18px 0 20px; }
.mapbox { height: 268px; width: 1626px; flex: none; position: relative; overflow: hidden; border-top: 1px solid #bfc2c5; }
.map { width: 1626px; height: 268px; margin-top: -1px; }
.lbl { font: 30px "Noto Sans CJK TC", sans-serif; fill: #7d8188; text-anchor: middle; paint-order: stroke; stroke: #e4e5e8; stroke-width: 3px; }
.device { position: absolute; left: 44px; top: -20px; width: 344px; height: 271px; border: 1px solid #dadce0; border-radius: 9px; background: rgba(255, 255, 255, .97); padding: 19px 27px; font-size: 13.900px; }
.dt { line-height: 20px; font-weight: 300; color: #3c4043; }
.dt b, .dleg { font-weight: 500; }
.device > svg { margin: 24px 0 0 88px; }
.dleg { display: flex; align-items: center; margin: 20px 0 0 96px; line-height: 20px; font-size: 13.600px; letter-spacing: .6px; color: #80868b; }
.dleg i { width: 7px; height: 7px; border-radius: 50%; background: #1967d2; margin-right: 5px; }
.dval { font: 23.500px Inter, sans-serif; font-weight: 300; color: #202124; line-height: 29px; margin-left: 108px; letter-spacing: .1px; }
.zoomctl { position: absolute; left: 1568px; top: 148px; width: 45px; height: 92px; background: #fff; border-radius: 2px; box-shadow: 0 1px 4px rgba(0, 0, 0, .25); display: flex; flex-direction: column; align-items: center; justify-content: space-between; padding: 12px 6px; }
.zoomctl svg { width: 20px; height: 21px; }
.zoomctl hr { width: 34px; margin: 0; border: 0; height: 1px; background: #e0e0e0; }
.attr { position: absolute; right: 0; bottom: 0; height: 17px; display: flex; gap: 3px; font-size: 13.500px; line-height: 17px; color: #444; }
.attr span { background: #f5f5f5; padding: 0 5px 0 7px; }
.attr span + span { padding: 0 8px 0 6px; }

.grid { display: grid; grid-template-columns: 434px 344px 344px 344px; grid-template-rows: 452px 60px; gap: 16px; padding-left: 44px; overflow: hidden; }
.card { background: #fefefe; border: 1px solid #dadce0; border-radius: 9px; padding: 26px 27px 0; display: flex; flex-direction: column; }
.wide { grid-column: span 2; }
h2 { margin: 0; font-size: 15.750px; font-weight: 300; color: #202124; line-height: 24px; height: 26px; white-space: nowrap; }
h2 u { text-decoration: none; display: inline-block; height: 23px; background: repeating-linear-gradient(90deg, #9aa0a6 0 5px, transparent 5px 9px) 0 100% / 100% 2px no-repeat; }
h2 .caret { margin: 0 1px 2px 5px; }
h3 { margin: 19px 0 0; font-size: 17.500px; font-weight: 400; color: #202124; line-height: 24px; height: 24px; display: flex; letter-spacing: .6px; }
h3 span { width: 28px; letter-spacing: .2px; }
h3 em { letter-spacing: .2px; }
.stat { display: flex; justify-content: space-between; height: 62px; margin-top: 10px; padding-left: 28px; }
.stat p { margin: -2px 0 0; font-size: 23.500px; line-height: 24px; color: #202124; }
.stat small { display: block; font-size: 13.600px; line-height: 16px; margin-top: 4px; }
.spark { width: 168px; height: 41px; margin-top: 2px; fill: #1a73e8; }
.spark.first { width: 202px; margin-right: 12px; }
.base { stroke: #1a73e8; stroke-width: 1; stroke-dasharray: .86 .14; }
.th { height: 27px; border-bottom: 1px solid #e4e5e7; display: flex; justify-content: space-between; font-size: 14.400px; font-weight: 300; color: #3c4043; line-height: 22px; flex: none; }
.tr { height: 34px; border-bottom: 1px solid #e4e5e7; display: flex; justify-content: space-between; font-size: 14.600px; line-height: 35px; position: relative; flex: none; }
.tr b { font-weight: 500; }
.tr em { color: #3c4043; }
.tr i { position: absolute; left: 0; bottom: -1px; height: 2px; background: #1a73e8; }
.tr:nth-last-child(2) { border-bottom-color: transparent; }
.pg { margin-top: auto; height: 24px; margin-bottom: 25px; display: flex; justify-content: flex-end; align-items: center; font-size: 14.600px; color: #3c4043; margin-right: -3px; }
.pg svg { width: 22px; height: 22px; color: #80868b; margin-left: 3px; }
.pg svg + svg { margin-left: 10px; }
.pg .act { color: #111; }
.fb { position: absolute; left: 1574px; top: 734px; width: 45px; height: 45px; border-radius: 50%; background: #fff; box-shadow: 0 1px 5px rgba(0, 0, 0, .35); display: grid; place-items: center; }
.sbar { position: absolute; right: 0; top: 128px; width: 6px; height: 426px; border-radius: 3px; background: #c1c1c1; }

.taskbar { height: 50px; flex: none; display: flex; color: #fff; font: 14.500px "Noto Sans", "Noto Sans CJK TC", sans-serif; background: linear-gradient(90deg, #2f3743, #2b3443 25%, #28374a 45%, #252c38 52%, #28291f 57%, #2a2b1f 64%, #35281f 69%, #3c3836 75%, #372b22 80%, #2f2720); }
.start { width: 69px; display: grid; place-items: center start; padding-left: 20px; }
.task { width: 190px; margin-right: 11px; border-bottom: 3px solid #76b9ed; display: flex; align-items: center; gap: 4px; padding: 3px 0 0 8px; }
.task span { letter-spacing: .05px; padding-bottom: 2px; }
.t-folder { padding-left: 13px; gap: 10px; margin-right: 6px; }
.t-folder span { letter-spacing: .25px; }
.cur { width: 200px; margin-right: 6px; background: #565e69; padding-left: 15px; }
.linetxt { font: 700 6px "Liberation Sans", sans-serif; fill: #00b900; }
.tray { margin-left: auto; display: flex; align-items: center; width: 240px; border-right: 1px solid #77706a; margin-right: 5px; }
.up { margin-left: 5px; }
.snd { margin-left: 11px; }
.xc { margin-left: 8px; }
.clock { width: 104px; text-align: center; line-height: 23px; font-size: 15.200px; margin-left: -1px; }
.note { margin-left: 9px; }
```
